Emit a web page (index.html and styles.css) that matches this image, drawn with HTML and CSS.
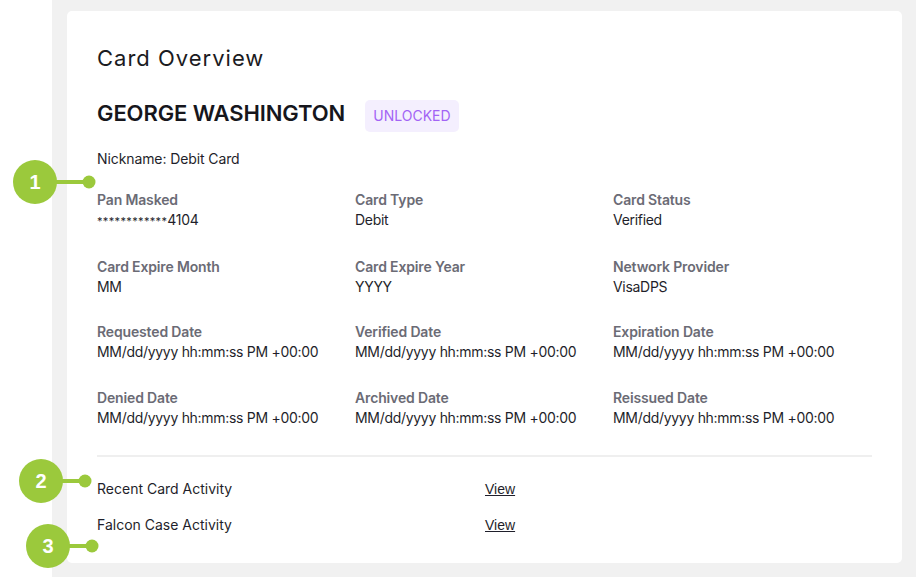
FILE: index.html
```html
<!DOCTYPE html>
<html>
<head>
<meta charset="utf-8">
<link rel="stylesheet" href="styles.css">
</head>
<body>
<div class="page">
  <div class="card">
    <h1 class="title">Card Overview</h1>
    <div class="name-row">
      <h2 class="name">GEORGE WASHINGTON</h2>
      <span class="badge">UNLOCKED</span>
    </div>
    <div class="nickname">Nickname: Debit Card</div>
    <div class="grid">
      <div class="field"><div class="label">Pan Masked</div><div class="value"><span class="mask">************</span>4104</div></div>
      <div class="field"><div class="label">Card Type</div><div class="value">Debit</div></div>
      <div class="field"><div class="label">Card Status</div><div class="value">Verified</div></div>
      <div class="field"><div class="label">Card Expire Month</div><div class="value">MM</div></div>
      <div class="field"><div class="label">Card Expire Year</div><div class="value">YYYY</div></div>
      <div class="field"><div class="label">Network Provider</div><div class="value">VisaDPS</div></div>
      <div class="field"><div class="label">Requested Date</div><div class="value">MM/dd/yyyy hh:mm:ss PM +00:00</div></div>
      <div class="field"><div class="label">Verified Date</div><div class="value">MM/dd/yyyy hh:mm:ss PM +00:00</div></div>
      <div class="field"><div class="label">Expiration Date</div><div class="value">MM/dd/yyyy hh:mm:ss PM +00:00</div></div>
      <div class="field"><div class="label">Denied Date</div><div class="value">MM/dd/yyyy hh:mm:ss PM +00:00</div></div>
      <div class="field"><div class="label">Archived Date</div><div class="value">MM/dd/yyyy hh:mm:ss PM +00:00</div></div>
      <div class="field"><div class="label">Reissued Date</div><div class="value">MM/dd/yyyy hh:mm:ss PM +00:00</div></div>
    </div>
    <hr class="divider">
    <div class="activity">
      <div class="act-row"><span class="act-name">Recent Card Activity</span><a class="act-link" href="#">View</a></div>
      <div class="act-row"><span class="act-name">Falcon Case Activity</span><a class="act-link" href="#">View</a></div>
    </div>
  </div>
</div>
<svg class="callouts" width="110" height="577" viewBox="0 0 110 577">
  <g fill="#9bc93c" stroke="#9bc93c">
    <line x1="40" y1="182" x2="89" y2="182" stroke-width="4"/>
    <circle cx="35" cy="182" r="22" stroke="none"/>
    <circle cx="89" cy="182" r="6.5" stroke="none"/>
    <line x1="45" y1="481" x2="85" y2="481" stroke-width="4"/>
    <circle cx="41" cy="481" r="22" stroke="none"/>
    <circle cx="85" cy="481" r="6.5" stroke="none"/>
    <line x1="52" y1="546" x2="92" y2="546" stroke-width="4"/>
    <circle cx="48" cy="546" r="22" stroke="none"/>
    <circle cx="92" cy="546" r="6.5" stroke="none"/>
  </g>
  <g class="num" fill="#ffffff" text-anchor="middle">
    <text x="35" y="189">1</text>
    <text x="41" y="488">2</text>
    <text x="48" y="553">3</text>
  </g>
</svg>
</body>
</html>
```
FILE: styles.css
```css
html, body {
  margin: 0;
  padding: 0;
  background: #ffffff;
}
body {
  font-family: Inter, "Noto Sans", sans-serif;
  color: #1f1f2b;
  width: 916px;
  height: 577px;
  overflow: hidden;
  position: relative;
}
.page {
  margin-left: 52px;
  height: 577px;
  box-sizing: border-box;
  background: #f1f1f1;
  padding: 11px 14px 14px 15px;
}
.card {
  background: #ffffff;
  border-radius: 5px;
  height: 552px;
  box-sizing: border-box;
  padding: 33px 30px 0 30px;
}
.title {
  margin: 0;
  font-size: 22px;
  font-weight: 400;
  line-height: 28px;
  letter-spacing: 1px;
  color: #1b1b22;
}
.name-row {
  display: flex;
  align-items: center;
  gap: 20px;
  margin-top: 25px;
}
.name {
  margin: 0 0 -3px 0;
  font-size: 22px;
  font-weight: 600;
  line-height: 32px;
  color: #16161c;
  letter-spacing: -0.1px;
  position: relative;
  top: -2px;
}
.badge {
  background: #f4effe;
  color: #a364f5;
  border-radius: 5px;
  font-size: 14px;
  line-height: 32px;
  padding: 0 8px;
  transform: translateY(3px);
}
.nickname {
  font-size: 14px;
  line-height: 20px;
  margin-top: 20px;
  letter-spacing: -0.1px;
}
.grid {
  display: grid;
  grid-template-columns: 258px 258px 1fr;
  row-gap: 25.7px;
  margin-top: 21px;
}
.label {
  font-size: 14px;
  font-weight: 600;
  color: #6b6b75;
  line-height: 20px;
  letter-spacing: -0.15px;
}
.value {
  font-size: 14px;
  line-height: 20px;
  color: #1f1f2b;
  letter-spacing: -0.3px;
}
.mask {
  font-size: 11px;
  letter-spacing: 0.35px;
}
.divider {
  border: none;
  border-top: 2px solid #efefef;
  margin: 27px 0 0 0;
}
.activity {
  display: flex;
  flex-direction: column;
  gap: 16px;
  margin-top: 22px;
}
.act-row {
  display: flex;
  font-size: 14px;
  line-height: 20px;
}
.act-name {
  width: 388px;
}
.act-link {
  color: #1f1f2b;
  text-decoration: underline;
  font-family: "Liberation Sans", Arial, sans-serif;
}
.callouts {
  position: absolute;
  left: 0;
  top: 0;
}
.num {
  font-family: "Liberation Sans", Arial, sans-serif;
  font-size: 20px;
  font-weight: 700;
}
```
